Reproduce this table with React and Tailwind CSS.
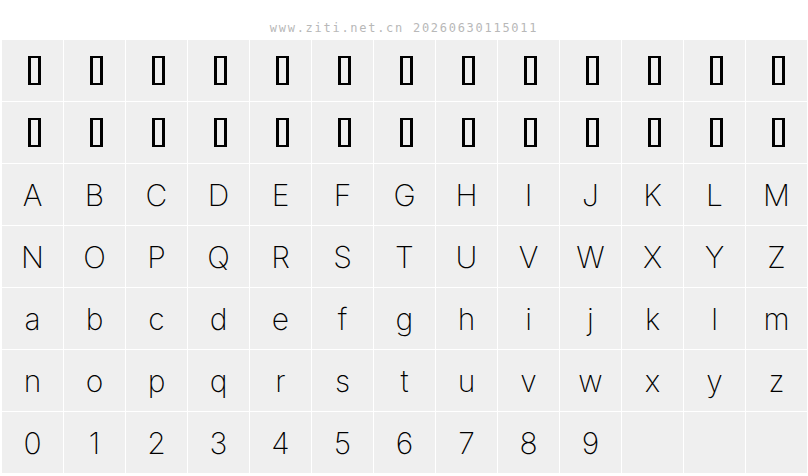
const upper = 'ABCDEFGHIJKLMNOPQRSTUVWXYZ'.split('')
const lower = 'abcdefghijklmnopqrstuvwxyz'.split('')
const digits = '0123456789'.split('')

const Tofu = () => (
  <div className="ml-[3px] h-[29px] w-[13px] border-x-[3px] border-y-[2px] border-black" />
)

export default function App() {
  const cells = [
    ...Array.from({ length: 26 }, (_, i) => ({ key: `t${i}`, tofu: true })),
    ...upper.map((c) => ({ key: `u${c}`, ch: c })),
    ...lower.map((c) => ({ key: `l${c}`, ch: c })),
    ...digits.map((c) => ({ key: `d${c}`, ch: c })),
    ...Array.from({ length: 3 }, (_, i) => ({ key: `e${i}`, ch: '' })),
  ]

  return (
    <div className="h-[476px] w-[808px] bg-white">
      {/* site stamp */}
      <div className="flex h-[40px] items-start justify-center pt-[20px]">
        <span className="font-['DejaVu_Sans_Mono',monospace] text-[12px] leading-[16px] tracking-[1.72px] text-[#b8b8b8]">
          www.ziti.net.cn 20260630115011
        </span>
      </div>

      {/* glyph grid */}
      <div className="grid grid-cols-[repeat(13,61px)] auto-rows-[61px] gap-px pl-[2px]">
        {cells.map((cell) => (
          <div key={cell.key} className="flex items-center justify-center bg-[#efefef]">
            {cell.tofu ? (
              <Tofu />
            ) : (
              <span className="font-['Inter',sans-serif] text-[30px] font-extralight leading-none text-black">
                {cell.ch}
              </span>
            )}
          </div>
        ))}
      </div>
    </div>
  )
}
